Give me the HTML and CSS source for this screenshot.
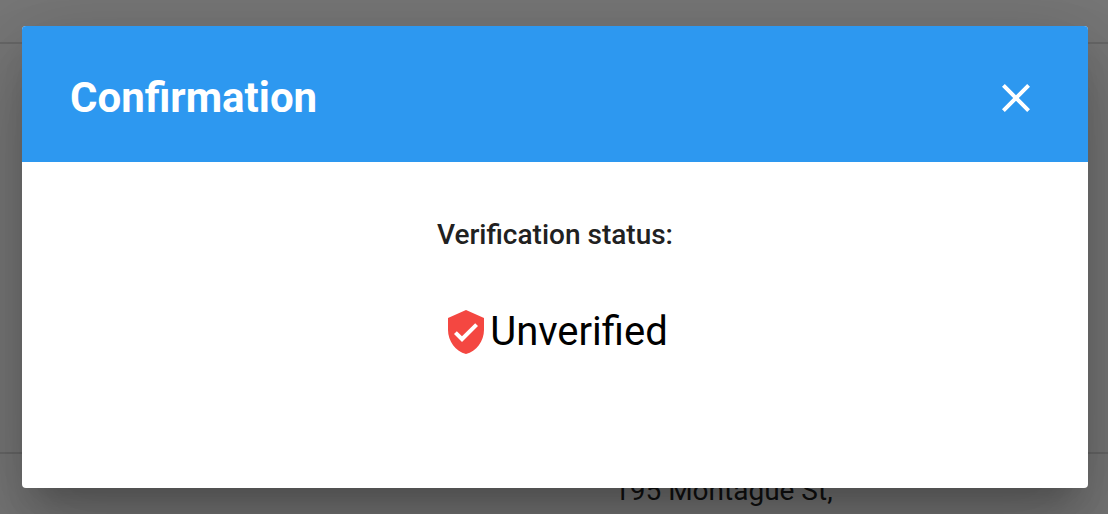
FILE: index.html
```html
<!DOCTYPE html>
<html lang="en">
<head>
<meta charset="utf-8">
<title>Confirmation</title>
<link rel="stylesheet" href="styles.css">
</head>
<body>
<main class="page" aria-hidden="true">
  <div class="row row-first"></div>
  <div class="row row-main"></div>
  <div class="row row-last"><p class="address">195 Montague St,</p></div>
</main>
<div class="overlay">
  <section class="dialog" role="dialog" aria-modal="true" aria-labelledby="dialog-title">
    <header class="dialog-header">
      <h1 class="dialog-title" id="dialog-title">Confirmation</h1>
      <button class="close" type="button" aria-label="Close">
        <svg class="close-icon" viewBox="0 0 24 24" aria-hidden="true"><path d="M19 6.410 17.590 5 12 10.590 6.410 5 5 6.410 10.590 12 5 17.590 6.410 19 12 13.410 17.590 19 19 17.590 13.410 12z"/></svg>
      </button>
    </header>
    <div class="dialog-body">
      <h2 class="label">Verification status:</h2>
      <p class="status">
        <svg class="shield" viewBox="0 0 24 24" aria-hidden="true"><path d="M12 1 3 5v6c0 5.550 3.840 10.740 9 12 5.160-1.260 9-6.450 9-12V5l-9-4zm-2 16-4-4 1.410-1.410L10 14.170l6.590-6.590L18 9l-8 8z"/></svg>
        <span>Unverified</span>
      </p>
    </div>
  </section>
</div>
</body>
</html>
```
FILE: styles.css
```css
* { box-sizing: border-box; }
body {
  margin: 0;
  font-family: Roboto, "Liberation Sans", sans-serif;
  color: #000;
}
.page {
  display: flex;
  flex-direction: column;
  height: 100vh;
  overflow: hidden;
  background: #777;
}
.row { border-bottom: 2px solid #686868; }
.row-first { height: 44px; }
.row-main { height: 410px; }
.row-last {
  flex: 1;
  border-bottom: 0;
  padding: 21px 0 0 614px;
}
.address {
  margin: 0;
  font-size: 28px;
  line-height: 32px;
  color: #111;
  white-space: nowrap;
}
.overlay {
  position: absolute;
  inset: 0;
  padding: 26px 20px 26px 22px;
}
.dialog {
  display: flex;
  flex-direction: column;
  height: 100%;
  overflow: hidden;
  border-radius: 4px;
  background: #fff;
  box-shadow: 0 22px 30px -14px rgba(0, 0, 0, 0.2), 0 48px 76px 6px rgba(0, 0, 0, 0.14), 0 18px 92px 16px rgba(0, 0, 0, 0.12);
}
.dialog-header {
  display: flex;
  align-items: center;
  justify-content: space-between;
  padding: 44px 48px 36px;
  background: #2d98f0;
  color: #fff;
}
.dialog-title {
  margin: 0;
  font-size: 42px;
  line-height: 56px;
  font-weight: 700;
}
.close {
  display: flex;
  padding: 0;
  border: 0;
  background: none;
  color: inherit;
}
.close-icon { width: 48px; height: 48px; fill: currentColor; }
.dialog-body {
  display: flex;
  flex-direction: column;
  align-items: center;
  gap: 57px;
  padding-top: 57px;
}
.label {
  margin: 0;
  font-size: 28px;
  line-height: 32px;
  font-weight: 500;
  color: #212121;
}
.status {
  display: flex;
  align-items: center;
  margin: 0;
  font-size: 40px;
  line-height: 48px;
}
.shield { width: 48px; height: 48px; fill: #f44741; }
```
